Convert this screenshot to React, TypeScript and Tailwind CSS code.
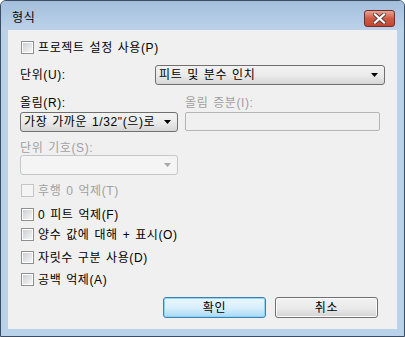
import React from "react"

const FONT = "font-['Liberation_Sans','Noto_Sans_CJK_KR',sans-serif]"
const TXT = "text-[12px] leading-[14px] tracking-[0.6px] [word-spacing:1px] whitespace-nowrap"

function Check({ label, disabled }: { label: string; disabled?: boolean }) {
    return (
        <div className="flex items-center h-[13px] ml-[1px]">
            <div
                className={
                    disabled
                        ? "w-[13px] h-[13px] border border-[#c5c5c5] bg-[#f4f4f4]"
                        : "w-[13px] h-[13px] border border-[#8e8f8f] p-[1px] bg-white"
                }
            >
                {!disabled && <div className="w-full h-full bg-gradient-to-br from-[#cbcfd5] to-[#f6f6f6]" />}
            </div>
            <span className={"ml-[4px] " + TXT + " " + (disabled ? "text-[#a0a0a0]" : "text-black")}>
                {label}
            </span>
        </div>
    )
}

function Combo({ text, width, disabled }: { text?: string; width: string; disabled?: boolean }) {
    return (
        <div
            className={
                width +
                " h-[20px] rounded-[3px] border flex items-center pl-[3px] pr-[6px] " +
                (disabled
                    ? "border-[#c3c7ca] bg-[#f4f4f4]"
                    : "border-[#707070] bg-gradient-to-b from-[#f2f2f2] via-[#ebebeb] to-[#d6d6d6]")
            }
        >
            <span className={"flex-1 text-black " + TXT}>{text}</span>
            <svg width="7" height="4" viewBox="0 0 7 4">
                <polygon points="0,0 7,0 3.5,4" fill={disabled ? "#a8a8a8" : "#000"} />
            </svg>
        </div>
    )
}

export default function App() {
    return (
        <div className={"w-[405px] h-[337px] bg-[#bad1ea] border border-[#3b4d62] rounded-t-[6px] flex flex-col overflow-hidden " + FONT}>
            <div className="h-[29px] flex items-start bg-gradient-to-b from-[#a3bedc] to-[#bcd2ea] pl-[11px] pr-[9px]">
                <span className={"mt-[10px] text-black " + TXT}>형식</span>
                <div className="ml-auto mt-[9px] w-[31px] h-[17px] rounded-[3px] border border-[#6e2e2a] bg-gradient-to-b from-[#e8a394] via-[#cf5b45] to-[#c5452f] flex items-center justify-center">
                    <svg width="13" height="11" viewBox="0 0 13 11">
                        <path d="M2 1.5 L11 9.5 M11 1.5 L2 9.5" stroke="#5b3d3a" strokeWidth="4" strokeLinecap="square" />
                        <path d="M2 1.5 L11 9.5 M11 1.5 L2 9.5" stroke="#ffffff" strokeWidth="2.2" strokeLinecap="square" />
                    </svg>
                </div>
            </div>
            <div className="mx-[7px] h-[299px] bg-[#f0f0f0] pl-[12px] flex flex-col">
                <div className="mt-[11px]">
                    <Check label="프로젝트 설정 사용(P)" />
                </div>
                <div className="mt-[11px] flex items-center">
                    <span className={"w-[135px] text-black " + TXT}>단위(U):</span>
                    <Combo text="피트 및 분수 인치" width="w-[230px]" />
                </div>
                <div className="mt-[11px] flex h-[14px]">
                    <span className={"w-[165px] text-black " + TXT}>올림(R):</span>
                    <span className={"text-[#a0a0a0] " + TXT}>올림 증분(I):</span>
                </div>
                <div className="mt-[2px] flex items-start">
                    <Combo text={"가장 가까운 1/32\"(으)로"} width="w-[158px]" />
                    <div className="ml-[7px] w-[195px] h-[19px] rounded-[2px] border border-[#b5b5b5] bg-[#f0f0f0]" />
                </div>
                <div className={"mt-[9px] h-[14px] text-[#a0a0a0] " + TXT}>단위 기호(S):</div>
                <div className="mt-0">
                    <Combo width="w-[158px]" disabled />
                </div>
                <div className="mt-[9px]">
                    <Check label="후행 0 억제(T)" disabled />
                </div>
                <div className="mt-[11px]">
                    <Check label="0 피트 억제(F)" />
                </div>
                <div className="mt-[7px]">
                    <Check label="양수 값에 대해 + 표시(O)" />
                </div>
                <div className="mt-[10px]">
                    <Check label="자릿수 구분 사용(D)" />
                </div>
                <div className="mt-[9px]">
                    <Check label="공백 억제(A)" />
                </div>
                <div className="mt-[11px] ml-[143px] flex gap-[9px]">
                    <button className={"w-[103px] h-[21px] rounded-[3px] border border-[#3c7fb1] bg-gradient-to-b from-[#eaf6fd] via-[#d9f0fc] to-[#a7d9f5] shadow-[inset_0_0_0_1px_#8fd6f6] text-black " + TXT}>
                        확인
                    </button>
                    <button className={"w-[103px] h-[21px] rounded-[3px] border border-[#707070] bg-gradient-to-b from-[#f2f2f2] via-[#ebebeb] to-[#d3d3d3] shadow-[inset_0_0_0_1px_#fcfcfc] text-black " + TXT}>
                        취소
                    </button>
                </div>
            </div>
        </div>
    )
}
